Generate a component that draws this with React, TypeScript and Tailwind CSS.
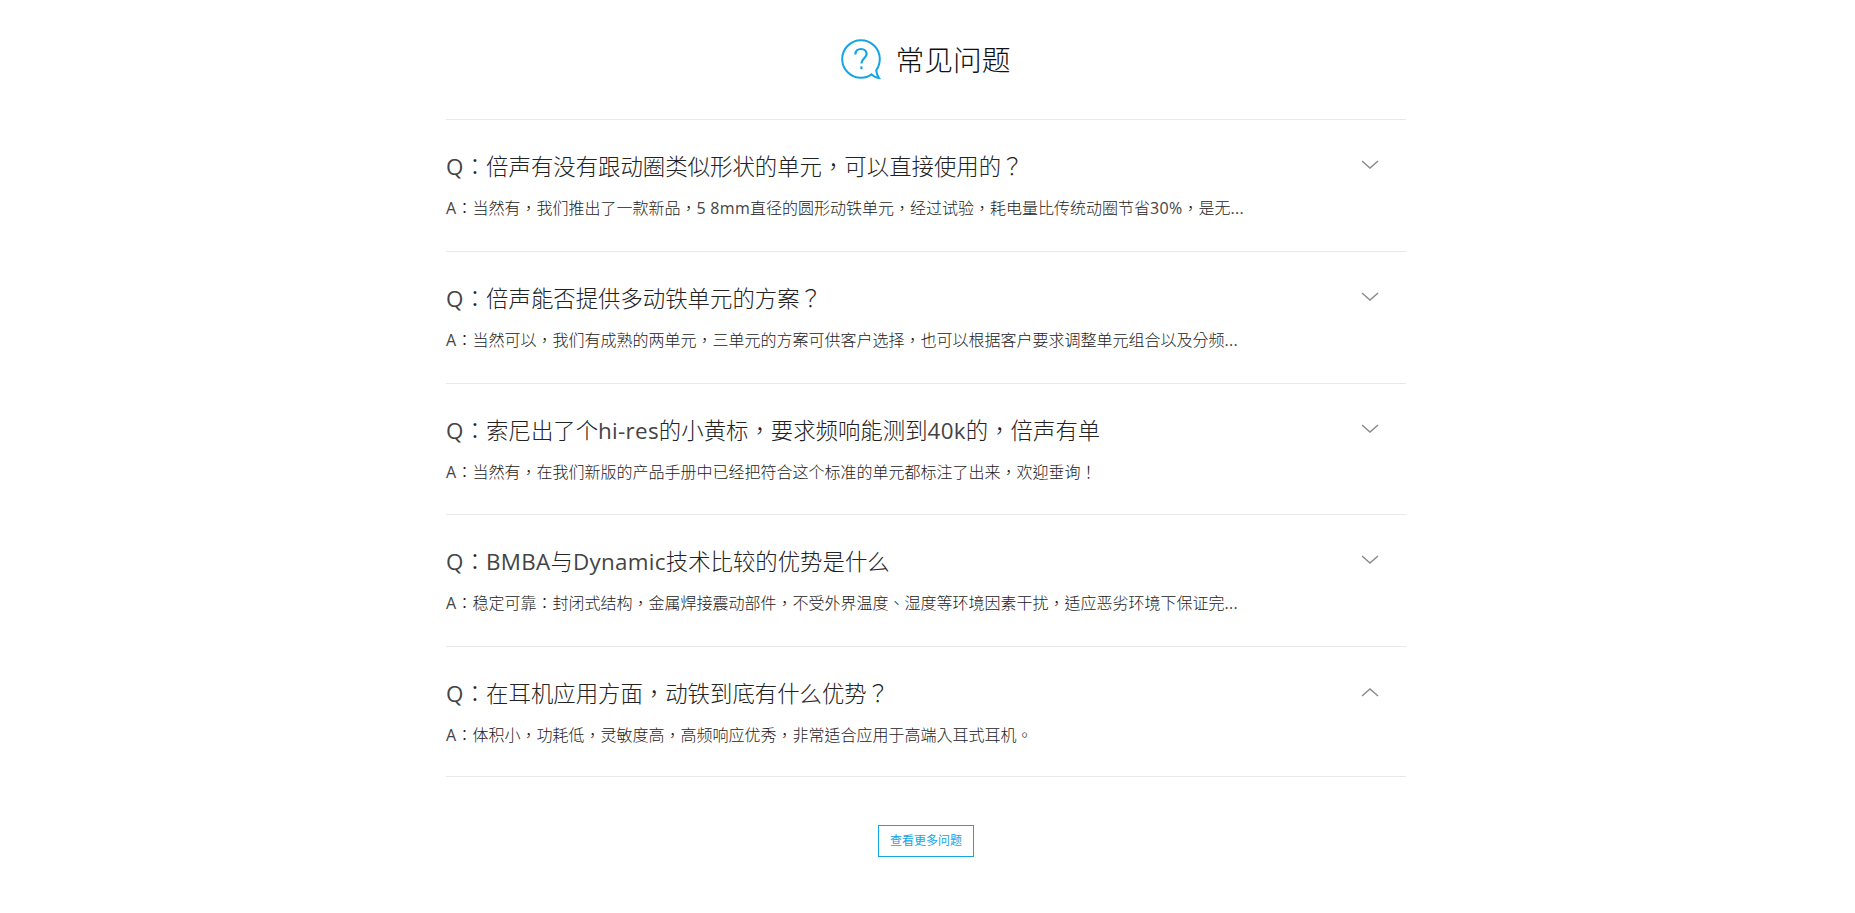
import React from 'react';

const FAQS = [
  { q: 'Q：倍声有没有跟动圈类似形状的单元，可以直接使用的？', a: 'A：当然有，我们推出了一款新品，5 8mm直径的圆形动铁单元，经过试验，耗电量比传统动圈节省30%，是无...' },
  { q: 'Q：倍声能否提供多动铁单元的方案？', a: 'A：当然可以，我们有成熟的两单元，三单元的方案可供客户选择，也可以根据客户要求调整单元组合以及分频...' },
  { q: 'Q：索尼出了个hi-res的小黄标，要求频响能测到40k的，倍声有单', a: 'A：当然有，在我们新版的产品手册中已经把符合这个标准的单元都标注了出来，欢迎垂询！' },
  { q: 'Q：BMBA与Dynamic技术比较的优势是什么', a: 'A：稳定可靠：封闭式结构，金属焊接震动部件，不受外界温度、湿度等环境因素干扰，适应恶劣环境下保证完...' },
  { q: 'Q：在耳机应用方面，动铁到底有什么优势？', a: 'A：体积小，功耗低，灵敏度高，高频响应优秀，非常适合应用于高端入耳式耳机。', open: true },
];

// latin runs stay at regular weight, the CJK around them is light
const Mixed = ({ text }: { text: string }) => (
  <>
    {text.split(/([A-Za-z0-9%. -]+)/).map((part, i) =>
      i % 2 ? <span key={i} className="font-normal tracking-[0.3px] text-[#444]">{part}</span> : part
    )}
  </>
);

const Chevron = ({ up }: { up?: boolean }) => (
  <svg width="18" height="10" viewBox="0 0 18 10" fill="none" stroke="#8a8a8e" strokeWidth="1.4">
    <path d={up ? 'M1 9 L9 2 L17 9' : 'M1 1 L9 8 L17 1'} />
  </svg>
);

export default function App() {
  return (
    <main className="min-h-[913px] bg-white pr-[3px] font-['Open_Sans','Noto_Sans_CJK_TC',sans-serif] font-light text-[#222]">
      <div className="mx-auto w-[960px]">
        <header className="flex h-[120px] items-center justify-center gap-[14px] border-b border-[#e8e8e8]">
          <svg width="40" height="42" viewBox="0 0 40 42" fill="none" className="mt-[1px]">
            <path d="M20 1.2 C9.6 1.2 1.2 9.6 1.2 20 C1.2 30.4 9.6 38.8 20 38.8 C24 38.8 27.6 37.6 30.6 35.4 C32.6 37.6 35.2 38.8 38 39 C36.4 37 35.6 34.2 35.2 31.4 C37.4 28.2 38.8 24.4 38.8 20 C38.8 9.6 30.4 1.2 20 1.2 Z" stroke="#12a5e6" strokeWidth="2" />
            <path d="M14.4 15.4 C14.4 12 16.8 10 20 10 C23.2 10 25.6 12 25.6 15 C25.6 19 20.4 19.6 20.4 24.4" stroke="#12a5e6" strokeWidth="2.2" />
            <path d="M20.4 27.4 V30.2" stroke="#12a5e6" strokeWidth="2.2" />
          </svg>
          <h1 className="text-[28.8px] leading-[40px] text-[#111]">常见问题</h1>
        </header>

        {FAQS.map((item) => (
          <section key={item.q} className={`border-b border-[#e8e8e8] pt-[30px] ${item.open ? 'h-[130px]' : 'h-[131.75px]'}`}>
            <div className="flex items-start justify-between pr-[27px]">
              <h2 className="text-[22.4px] leading-[34px]"><Mixed text={item.q} /></h2>
              <div className="pt-[10px]">
                <Chevron up={item.open} />
              </div>
            </div>
            <p className="mt-[12px] text-[16px] leading-[24px] text-[#222]"><Mixed text={item.a} /></p>
          </section>
        ))}

        <div className="flex justify-center pt-[48px]">
          <a className="flex h-[32px] w-[96px] items-center justify-center border border-[#12a5e6] text-[12px] font-normal text-[#12a5e6]">查看更多问题</a>
        </div>
      </div>
    </main>
  );
}
